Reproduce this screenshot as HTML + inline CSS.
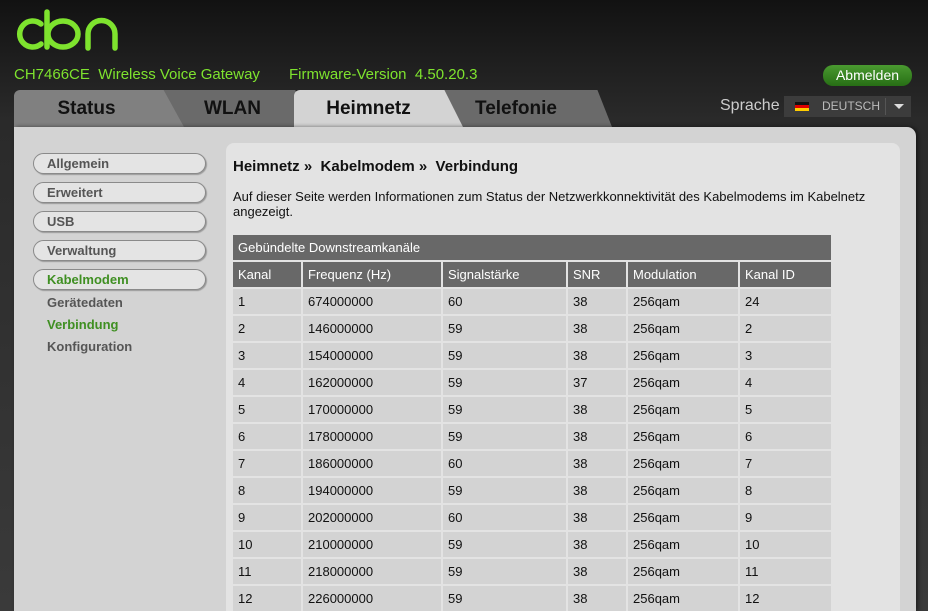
<!DOCTYPE html>
<html><head><meta charset="utf-8"><style>
*{margin:0;padding:0;box-sizing:border-box}
html{overflow:hidden;height:611px}
body{width:928px;height:611px;overflow:hidden;background:linear-gradient(#121212,#2a2a2a 120px,#3a3a3a);font-family:"Liberation Sans",sans-serif;position:relative}
.abs{position:absolute}
.green{color:#7ee32e}
.tab{position:absolute;top:90px;height:37px;font-weight:bold;font-size:19px;color:#111;line-height:38px;text-align:center}
#main{position:absolute;left:14px;top:127px;width:902px;height:484px;background:#d3d3d3;border-top-right-radius:9px;box-shadow:2px 0 4px rgba(0,0,0,.5)}
#inner{position:absolute;left:226px;top:143px;width:674px;height:468px;background:#e3e3e3;border-radius:8px 8px 0 0}
.btn{position:absolute;left:33px;width:173px;height:21px;border:1px solid #8a8a8a;border-radius:11px;background:#e4e4e4;box-shadow:1px 1px 1px #999;font-weight:bold;font-size:13px;color:#555;padding-left:13px;line-height:19px}
.sub{position:absolute;left:47px;font-weight:bold;font-size:13px;color:#555}
table{position:absolute;left:233px;top:235px;border-collapse:separate;border-spacing:0;font-size:13px;color:#111}
td,th{height:27px;padding:0 5px;text-align:left;font-weight:normal;border-right:2px solid #e3e3e3;border-bottom:2px solid #e3e3e3;background:#d3d3d3}
th{background:#686868;color:#fff}
td:last-child,th:last-child{border-right:none}
</style></head><body>
<svg class="abs" style="left:0;top:0" width="130" height="60"><g fill="none" stroke="#7ee32e" stroke-width="5.5" stroke-linecap="round">
<path d="M41 24 A13 13 0 1 0 41 44"/>
<path d="M47 12 V47"/><ellipse cx="63" cy="34" rx="15" ry="13"/>
<path d="M88 48 V34 A13.5 13.5 0 0 1 115 34 V48"/></g></svg>
<div class="abs green" style="left:14px;top:66px;font-size:15px">CH7466CE&nbsp; Wireless Voice Gateway</div>
<div class="abs green" style="left:289px;top:66px;font-size:15px">Firmware-Version&nbsp; 4.50.20.3</div>
<div class="abs" style="left:823px;top:65px;width:89px;height:21px;border-radius:10px;background:linear-gradient(#4a9a30,#276e15);color:#fff;font-size:14px;text-align:center;line-height:20px">Abmelden</div>
<div class="abs" style="left:720px;top:97px;font-size:16px;color:#ccc">Sprache</div>
<div class="abs" style="left:784px;top:96px;width:127px;height:21px;background:#3c3c3c">
<div class="abs" style="left:11px;top:6px;width:14px;height:9px;background:linear-gradient(#111 33%,#d00 33% 66%,#fc0 66%)"></div>
<div class="abs" style="left:38px;top:3px;font-size:12px;color:#bbb">DEUTSCH</div>
<div class="abs" style="left:101px;top:2px;width:1px;height:17px;background:#555"></div>
<div class="abs" style="left:110px;top:8px;border-left:5px solid transparent;border-right:5px solid transparent;border-top:5px solid #ddd"></div>
</div>
<div class="tab" style="left:150px;width:165px;background:#6a6a6a;clip-path:polygon(0 0,88% 0,100% 100%,0 100%);border-top-left-radius:6px">WLAN</div>
<div class="tab" style="left:430px;width:182px;background:#6a6a6a;clip-path:polygon(0 0,92% 0,100% 100%,0 100%);border-top-right-radius:6px;padding-right:10px">Telefonie</div>
<div class="tab" style="left:14px;width:170px;background:#808080;clip-path:polygon(0 0,88% 0,100% 100%,0 100%);border-top-left-radius:6px;padding-right:25px">Status</div>
<div class="tab" style="left:294px;width:169px;background:#d3d3d3;clip-path:polygon(0 0,89% 0,100% 100%,0 100%);border-top-left-radius:6px;padding-right:20px">Heimnetz</div>
<div id="main"></div>
<div id="inner"></div>
<div class="btn" style="top:153px">Allgemein</div>
<div class="btn" style="top:182px">Erweitert</div>
<div class="btn" style="top:211px">USB</div>
<div class="btn" style="top:240px">Verwaltung</div>
<div class="btn" style="top:269px;color:#3f8f22">Kabelmodem</div>
<div class="sub" style="top:295px">Gerätedaten</div>
<div class="sub" style="top:317px;color:#3f8f22">Verbindung</div>
<div class="sub" style="top:339px">Konfiguration</div>
<div class="abs" style="left:233px;top:158px;font-size:15px;font-weight:bold;color:#111">Heimnetz » &nbsp;Kabelmodem » &nbsp;Verbindung</div>
<div class="abs" style="left:233px;top:189px;width:660px;font-size:13px;line-height:15px;color:#111">Auf dieser Seite werden Informationen zum Status der Netzwerkkonnektivität des Kabelmodems im Kabelnetz angezeigt.</div>
<table>
<tr><th colspan="6" style="height:27px">Gebündelte Downstreamkanäle</th></tr>
<tr><th style="width:70px">Kanal</th><th style="width:140px">Frequenz (Hz)</th><th style="width:125px">Signalstärke</th><th style="width:60px">SNR</th><th style="width:112px">Modulation</th><th style="width:91px">Kanal ID</th></tr>
<tr><td>1</td><td>674000000</td><td>60</td><td>38</td><td>256qam</td><td>24</td></tr>
<tr><td>2</td><td>146000000</td><td>59</td><td>38</td><td>256qam</td><td>2</td></tr>
<tr><td>3</td><td>154000000</td><td>59</td><td>38</td><td>256qam</td><td>3</td></tr>
<tr><td>4</td><td>162000000</td><td>59</td><td>37</td><td>256qam</td><td>4</td></tr>
<tr><td>5</td><td>170000000</td><td>59</td><td>38</td><td>256qam</td><td>5</td></tr>
<tr><td>6</td><td>178000000</td><td>59</td><td>38</td><td>256qam</td><td>6</td></tr>
<tr><td>7</td><td>186000000</td><td>60</td><td>38</td><td>256qam</td><td>7</td></tr>
<tr><td>8</td><td>194000000</td><td>59</td><td>38</td><td>256qam</td><td>8</td></tr>
<tr><td>9</td><td>202000000</td><td>60</td><td>38</td><td>256qam</td><td>9</td></tr>
<tr><td>10</td><td>210000000</td><td>59</td><td>38</td><td>256qam</td><td>10</td></tr>
<tr><td>11</td><td>218000000</td><td>59</td><td>38</td><td>256qam</td><td>11</td></tr>
<tr><td>12</td><td>226000000</td><td>59</td><td>38</td><td>256qam</td><td>12</td></tr>
</table>
</body></html>
